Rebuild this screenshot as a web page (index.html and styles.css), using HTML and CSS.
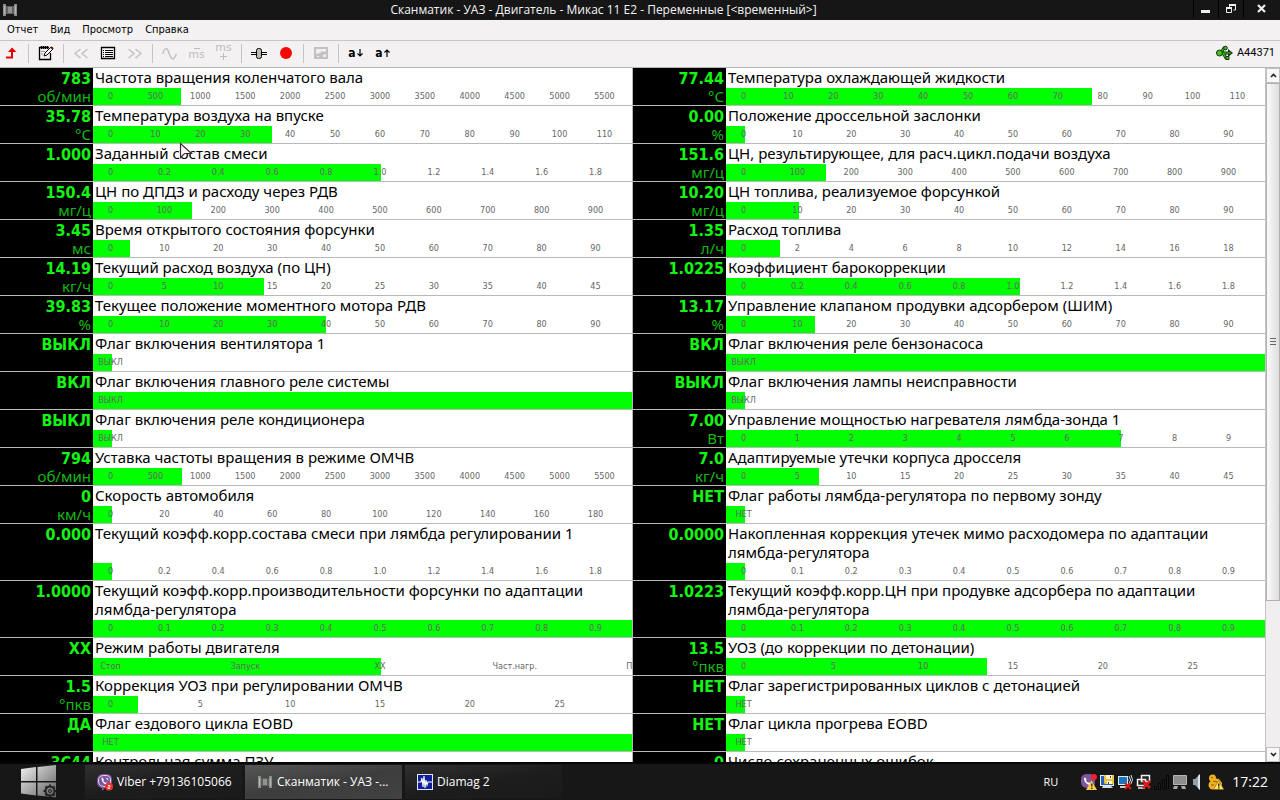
FILE: index.html
```html
<!DOCTYPE html>
<html lang="ru">
<head>
<meta charset="utf-8">
<title>Сканматик - УАЗ - Двигатель - Микас 11 E2 - Переменные</title>
<link rel="stylesheet" href="styles.css">
</head>
<body>
<header class="titlebar">
  <svg class="app-icon" width="16" height="16" viewBox="0 0 16 16"><path d="M1 2h3v2h8V2h3v12h-3v-2H4v2H1z" fill="#8a8d8a"/><path d="M2 4h1v8H2zM13 4h1v8h-1z" fill="#b5b8b5"/><path d="M4 4h8v8H4z" fill="#5f625f"/><path d="M6 5h4v6H6z" fill="#8f928f"/></svg>
  <h1 class="caption">Сканматик - УАЗ - Двигатель - Микас 11 E2 - Переменные [&lt;временный&gt;]</h1>
  <div class="window-buttons">
    <button class="win-btn" aria-label="Свернуть"><svg width="10" height="10" viewBox="0 0 10 10"><path d="M0 6h9v3H0z" fill="#eee"/></svg></button>
    <button class="win-btn" aria-label="Восстановить"><svg width="10" height="10" viewBox="0 0 10 10"><path d="M3.500 3V1h6v5h-2M.5 4.500h5v4h-5z" fill="none" stroke="#eee"/><path d="M3 0h7v2H3zM0 3h6v2H0z" fill="#eee"/></svg></button>
    <button class="win-btn win-close" aria-label="Закрыть"><svg width="10" height="10" viewBox="0 0 10 10"><path d="M1 1l7 7M8 1L1 8" stroke="#eee" stroke-width="2.200"/></svg></button>
  </div>
</header>

<nav class="menubar">
  <button class="menu-item">Отчет</button>
  <button class="menu-item">Вид</button>
  <button class="menu-item">Просмотр</button>
  <button class="menu-item">Справка</button>
</nav>

<div class="toolbar" role="toolbar">
  <button class="tool" aria-label="Назад"><svg width="16" height="16" viewBox="0 0 16 16"><path d="M2 12.500h6V6" fill="none" stroke="#e80000" stroke-width="2"/><path d="M4 7l4-4.500L12.500 7z" fill="#e80000"/></svg></button>
  <span class="sep"></span>
  <button class="tool" aria-label="Заметки"><svg width="16" height="16" viewBox="0 0 16 16" fill="none" stroke="#000"><path d="M11 2.500H1.500v12h11V8M3.500 1v3M5.500 1v3M7.500 1v3M9.500 1v3" stroke-width="1.300"/><path d="M6 11l1-3 6-6 2 2-6 6z" fill="#fff"/><path d="M13 2l2 2" stroke="#701010" stroke-width="2"/><path d="M3 6.500h4M3 9h2" stroke="#999"/></svg></button>
  <span class="sep"></span>
  <button class="tool" disabled aria-label="Предыдущая"><svg width="16" height="16" viewBox="0 0 16 16" fill="none" stroke="#c2c2c2" stroke-width="1.400"><path d="M7.500 4L2 8.500 7.500 13M14.500 4L9 8.500l5.500 4.500"/></svg></button>
  <button class="tool" aria-label="Список"><svg width="16" height="16" viewBox="0 0 16 16"><path d="M1.500 2.500h13v11h-13z" fill="#fff" stroke="#000" stroke-width="1.300"/><path d="M3 5.500h1M5 5.500h8M3 7.500h1M5 7.500h8M3 9.500h1M5 9.500h8M3 11.500h1M5 11.500h8" stroke="#000"/></svg></button>
  <button class="tool" disabled aria-label="Следующая"><svg width="16" height="16" viewBox="0 0 16 16" fill="none" stroke="#c2c2c2" stroke-width="1.400"><path d="M1.500 4L7 8.500 1.500 13M8.500 4l5.500 4.500L8.500 13"/></svg></button>
  <span class="sep"></span>
  <button class="tool" disabled aria-label="График"><svg width="16" height="16" viewBox="0 0 16 16" fill="none" stroke="#c2c2c2" stroke-width="1.500"><path d="M1 9c1.500-7 4-7 6-1s4.500 8 6 3.500L14.500 9"/></svg></button>
  <button class="tool ms ms-minus" disabled aria-label="Уменьшить интервал"><svg width="6" height="1" viewBox="0 0 6 1"><path d="M0 0h6v1H0z" fill="#bdbdbd"/></svg><span>ms</span></button>
  <button class="tool ms ms-plus" disabled aria-label="Увеличить интервал"><span>ms</span><svg width="7" height="7" viewBox="0 0 7 7"><path d="M3 0h1v3h3v1H4v3H3V4H0V3h3z" fill="#bdbdbd"/></svg></button>
  <span class="sep"></span>
  <button class="tool" aria-label="Метка"><svg width="18" height="16" viewBox="0 0 18 16"><path d="M1 7.500h16M1 9.500h16" stroke="#000"/><path d="M2 8h3v1H2zM13 8h3v1h-3z" fill="#fff"/><rect x="6.500" y="3.500" width="5" height="10" rx="2" fill="#bcbcae" stroke="#000"/></svg></button>
  <button class="tool" aria-label="Запись"><svg width="16" height="16" viewBox="0 0 16 16"><circle cx="8" cy="8" r="6" fill="#fa0505"/></svg></button>
  <span class="sep"></span>
  <button class="tool" disabled aria-label="Сохранить"><svg width="16" height="16" viewBox="0 0 16 16"><path d="M1 2h14v12H1z" fill="#c2c2c2"/><path d="M3 4h10v2l-2 1-2-1-2 2-4 1z" fill="#f1f0f1"/><path d="M4 11h2v1H4zM10 10l3-1v3h-3z" fill="#f1f0f1"/></svg></button>
  <span class="sep"></span>
  <button class="tool sort">a<svg width="6" height="8" viewBox="0 0 6 8"><path d="M3 0v7M.5 4.500L3 7l2.500-2.500" fill="none" stroke="#000" stroke-width="1.200"/></svg></button>
  <button class="tool sort">a<svg width="6" height="8" viewBox="0 0 6 8"><path d="M3 8V1M.5 3.500L3 1l2.500 2.500" fill="none" stroke="#000" stroke-width="1.200"/></svg></button>
  <div class="device">
    <svg width="17" height="16" viewBox="0 0 17 16"><g fill="none" stroke="#17350f" stroke-width="3"><path d="M2 8h12M5 8l3-5h2M7 8l3 5h2"/></g><path d="M12 4l5 4-5 4z" fill="#17350f"/><g fill="none" stroke="#40c51a" stroke-width="1.200"><path d="M2 8h13M5 8l3-5h2M7 8l3 5h2"/></g><circle cx="3.500" cy="8" r="3" fill="#40c51a" stroke="#17350f"/><circle cx="9.500" cy="3" r="1.800" fill="#40c51a" stroke="#17350f"/><path d="M10 11.500h3v3h-3z" fill="#40c51a" stroke="#17350f"/></svg>
    <span>A44371</span>
  </div>
</div>

<main class="workspace">
  <section class="gauges" id="gauges"></section>
  <div class="scrollbar">
    <button class="scroll-btn" aria-label="Вверх"><svg width="7" height="5" viewBox="0 0 7 5"><path d="M1 4l2.500-2.500L6 4" fill="none" stroke="#222" stroke-width="1.600"/></svg></button>
    <div class="scroll-track"><div class="scroll-thumb"><i></i><i></i><i></i></div></div>
    <button class="scroll-btn" aria-label="Вниз"><svg width="7" height="5" viewBox="0 0 7 5"><path d="M1 1l2.500 2.500L6 1" fill="none" stroke="#222" stroke-width="1.600"/></svg></button>
  </div>
</main>

<footer class="taskbar">
  <button class="start" aria-label="Пуск"><svg width="38" height="34" viewBox="0 0 38 34"><defs><linearGradient id="pane" x1="0" y1="0" x2="1" y2="1"><stop offset="0" stop-color="#f2f2f2"/><stop offset="1" stop-color="#5c5c5c"/></linearGradient></defs><path d="M1 4l15-2v14H1zM17.500 2L36 0v16H17.500zM1 17.500h15v13L1 28.500zM17.500 17.500H36v15l-18.500-2z" fill="url(#pane)"/><g fill="none" stroke="#222"><circle cx="30" cy="26" r="4.500" stroke-width="2"/><circle cx="30" cy="26" r="1.500"/><path d="M30 19.500v2M30 30.500v2M23.500 26h2M34.500 26h2M25.500 21.500l1.500 1.500M33 29l1.500 1.500M34.500 21.500L33 23M27 29l-1.500 1.500" stroke-width="1.800"/></g></svg></button>
  <div class="tasks">
    <button class="task"><svg width="16" height="17" viewBox="0 0 16 17"><path d="M8 0c6 0 7 2 7 7s-2 7-7 7l-3 3v-3C1 13 0 11 0 7c0-5 2-7 8-7z" fill="#7d559c"/><path d="M8 1.500c4.500 0 5.500 1.500 5.500 5.500S12 12.500 8 12.500 1.500 11 1.500 7 3 1.500 8 1.500z" fill="none" stroke="#e6dcf0" stroke-width="1"/><path d="M4.500 4c0 3 2 6 5.500 7l1-1.500-2-1.300-1 .6L6.300 7l.6-1L5.600 3.500zM8.500 3.500c2 .3 3 1.500 3 3.500" fill="#fff"/><circle cx="12" cy="12.500" r="4" fill="#e8322d"/><path d="M11 11.500h2v1.500h-2v1.500h2" fill="none" stroke="#fff" stroke-width=".8"/></svg><span>Viber +79136105066</span></button>
    <button class="task task-active"><svg width="16" height="14" viewBox="0 0 16 14"><path d="M1 1h3v2h8V1h3v12h-3v-2H4v2H1z" fill="#8a8d8a"/><path d="M2 3h1v8H2zM13 3h1v8h-1z" fill="#b5b8b5"/><path d="M4 3h8v8H4z" fill="#5c5f5c"/><path d="M6 4h4v6H6z" fill="#8f928f"/></svg><span>Сканматик - УАЗ -...</span></button>
    <button class="task"><svg width="16" height="16" viewBox="0 0 16 16"><path d="M0 0h16v16H0z" fill="#dfe8ff"/><path d="M1 1h14v14H1z" fill="#10209a"/><path d="M1 8h3l1-4 1 9 1-11 1 12 1-8 1 5 1-3h4" fill="none" stroke="#fff" stroke-width="1.100"/></svg><span>Diamag 2</span></button>
  </div>
  <div class="tray">
    <span class="lang">RU</span>
    <div class="tray-icons">
      <svg width="17" height="16" viewBox="0 0 17 16"><path d="M7 0c6 0 7 2 7 7s-2 7-7 7-7-2-7-7 1-7 7-7z" fill="#7d559c"/><path d="M3 4c0 4 2.500 6.500 6 7l1-1.500-2-1.300-1 .6L5 7l.6-1L4.500 3.500z" fill="#fff"/><circle cx="13" cy="3" r="3" fill="#f2202d"/><path d="M10.500 6.500L16 16H5z" fill="#f6ce55"/><path d="M10 9.500h1.500v3H10zM10 13.500h1.500V15H10z" fill="#5a3a00"/></svg>
      <svg width="16" height="16" viewBox="0 0 16 16"><path d="M0 1h14v11H0z" fill="#e8eef5"/><path d="M1 2h12v9H1z" fill="#2460b8"/><path d="M4 1h10v9H5L4 9z" fill="#e9c544"/><path d="M6 1h6v4H6zM7 7h5v3H7z" fill="#fff8d8"/><path d="M10 2h1v2h-1zM8 8h1v2H8z" fill="#444"/><path d="M3 12h8l2 2H2z" fill="#ddd"/></svg>
      <svg width="16" height="16" viewBox="0 0 16 16"><path d="M0 2h10v9H0z" fill="#dfe8f0"/><path d="M1 3h8v7H1z" fill="#1876c0"/><path d="M2 12h6v2H2z" fill="#ccc"/><path d="M9 3q2 3 0 6M11 2q3 4 0 8M13 1q3 5 0 9" fill="none" stroke="#cfe4f2"/><path d="M7 9l6 6M13 9l-6 6" stroke="#e01818" stroke-width="2"/></svg>
      <svg width="16" height="16" viewBox="0 0 16 16"><path d="M5.500 1.500h8v6h-8zM1.500 5.500h8v6h-8z" fill="#222" stroke="#eee" stroke-width="1.500"/><path d="M2 14h7" stroke="#eee" stroke-width="1.500"/><path d="M7 7l7 7M14 7l-7 7" stroke="#e01818" stroke-width="2.500"/></svg>
      <svg width="16" height="16" viewBox="0 0 16 16" fill="#1e1e1e" stroke="#060606"><path d="M.5 12.500h2v3h-2zM4.500 9.500h2v6h-2zM8.500 5.500h2v10h-2zM12.500 1.500h2v14h-2z"/></svg>
      <svg width="16" height="16" viewBox="0 0 16 16"><path d="M1.500 1.500h13v9h-13z" fill="#8d8d8d" stroke="#b5b5b5"/><path d="M2 12h4l-1 3H1zM9 12h4l1 3h-4z" fill="#aaa"/></svg>
      <svg width="16" height="16" viewBox="0 0 16 16"><path d="M3 5h2l5-5v16l-5-5H3z" fill="#8fa0ae"/><path d="M8 2l2-2v16l-2-2z" fill="#dce3e8"/></svg>
      <svg width="16" height="16" viewBox="0 0 16 16"><circle cx="4.500" cy="4" r="3.500" fill="#eeb120"/><circle cx="5" cy="11" r="4.500" fill="#eeb120"/><path d="M5 4l6 1 3 4v6H6z" fill="#eeb120"/><path d="M3 3.500h2M5 7l4 1M3 11h3" stroke="#8a5a00"/><path d="M10.500 6.500L16 15.500H5.500z" fill="#ffe36a" stroke="#6d5200" stroke-width=".6"/><path d="M10 9.500h1.500v3H10zM10 13.200h1.500v1.300H10z" fill="#3a2a00"/></svg>
    </div>
    <time class="clock">17:22</time>
  </div>
</footer>

<svg class="pointer" width="14" height="18" viewBox="0 0 14 18"><path d="M1.500 1.500v14l4-4h7z" fill="#fff" stroke="#4a2634" stroke-width="1.200"/></svg>
<script src="gauges.js"></script>
</body>
</html>
```
FILE: styles.css
```css
* { box-sizing: border-box; }

body {
  margin: 0;
  height: 100vh;
  display: flex;
  flex-direction: column;
  overflow: hidden;
  background: #fff;
  color: #000;
  font: 11px/14px "DejaVu Sans Condensed", "Noto Sans", sans-serif;
}

button {
  margin: 0;
  padding: 0;
  border: 0;
  background: none;
  color: inherit;
  font: inherit;
}

svg { display: block; flex: none; }

/* Title bar */
.titlebar {
  display: grid;
  grid-template-columns: 18px 1fr 87px;
  align-items: center;
  height: 20px;
  flex: none;
  background: #161616;
  color: #f4f4f4;
}
.app-icon { margin-left: 2px; }
.caption {
  margin: 0;
  padding-right: 4px;
  text-align: center;
  font: 12px/20px "Open Sans", sans-serif;
  white-space: nowrap;
}
.window-buttons { display: flex; height: 20px; }
.win-btn {
  width: 25px;
  height: 18px;
  display: flex;
  align-items: center;
  justify-content: center;
  border-left: 1px solid #000;
}
.win-close { width: 36px; }

/* Menu and toolbar */
.menubar {
  display: flex;
  gap: 12px;
  height: 21px;
  flex: none;
  padding-left: 7px;
  background: #f3f1f2;
  border-bottom: 1px solid #c6c6c6;
}
.menu-item { height: 20px; }
.toolbar {
  display: flex;
  align-items: center;
  height: 27px;
  flex: none;
  padding: 0 5px 2px 0;
  background: #f3f1f2;
  border-bottom: 1px solid #b4b4b4;
}
.tool {
  width: 27px;
  height: 22px;
  display: flex;
  align-items: center;
  justify-content: center;
}
.tool:first-child { width: 24px; }
.sep {
  width: 1px;
  height: 19px;
  margin: 0 3px 0 4px;
  background: #c4c4c4;
}
.ms {
  flex-direction: column;
  color: #bdbdbd;
  font: 11px/11px "DejaVu Sans", sans-serif;
}
.ms-minus { padding-top: 2px; }
.ms-plus { padding-bottom: 4px; }
.sort {
  gap: 1px;
  font: bold 12px/14px "DejaVu Sans Condensed", sans-serif;
}
.device {
  display: flex;
  align-items: center;
  gap: 4px;
  margin-left: auto;
  font: 11px/16px Roboto, sans-serif;
}

/* Gauges */
.workspace {
  display: flex;
  flex: 1;
  min-height: 0;
}
.gauges {
  flex: 1;
  display: grid;
  grid-template-columns: 1fr 1fr;
  column-gap: 1px;
  align-content: start;
  overflow: hidden;
  background: #b9b9b9;
}
.gauge {
  display: grid;
  grid-template-columns: 93px minmax(0, 1fr);
  border-bottom: 1px solid #b9b9b9;
  background: #fff;
}
.reading {
  padding: 1px 2px 0 0;
  background: #000;
  text-align: right;
  font-size: 16px;
  line-height: 19px;
  white-space: nowrap;
}
.value { display: block; color: #14f514; font-weight: bold; }
.unit {
  display: block;
  height: 17px;
  color: #12b812;
  font-family: "Noto Sans", sans-serif;
  font-size: 15px;
  line-height: 17px;
}
.body { display: flex; flex-direction: column; min-width: 0; }
.name {
  flex: 1;
  margin: 0;
  padding: 0 12px 1px 2px;
  font: 15px/19px "Noto Sans", sans-serif;
}
.scale { display: grid; height: 17px; overflow: hidden; }
.bar, .ticks { grid-area: 1 / 1; }
.bar { min-width: 19px; background: #0f0; }
.ticks {
  display: flex;
  min-width: 0;
  color: #666;
  font: 9px/17px "DejaVu Sans Condensed", sans-serif;
}
.cell { flex: none; }
.tick {
  display: flex;
  justify-content: center;
  width: 35px;
  white-space: nowrap;
}

/* Scrollbar */
.scrollbar {
  display: flex;
  flex-direction: column;
  width: 15px;
  background: #f0eeef;
  border-left: 1px solid #c4c4c4;
}
.scroll-btn {
  height: 15px;
  display: flex;
  align-items: center;
  justify-content: center;
  border: 1px solid #c0c0c0;
  background: #f8f8f8;
}
.scroll-track { flex: 1; }
.scroll-thumb {
  display: flex;
  flex-direction: column;
  align-items: center;
  justify-content: center;
  gap: 2px;
  height: 78%;
  border: 1px solid #b0b0b0;
  background: linear-gradient(90deg, #fafafa, #dedede);
}
.scroll-thumb i { width: 6px; height: 1px; background: #666; }

/* Taskbar */
.taskbar {
  display: flex;
  align-items: center;
  height: 38px;
  flex: none;
  border-top: 2px solid #050505;
  background: #171717;
  color: #fff;
  font: 12px/16px "Open Sans", sans-serif;
}
.start { width: 85px; padding-left: 20px; }
.tasks { display: flex; gap: 3px; }
.task {
  display: flex;
  align-items: center;
  gap: 4px;
  width: 157px;
  height: 34px;
  padding-left: 12px;
  background: linear-gradient(170deg, #303030, #1d1d1d 50%, #1a1a1a);
  white-space: nowrap;
}
.task-active { background: linear-gradient(170deg, #565656, #3d3d3d 50%, #424242); }
.tray {
  display: flex;
  align-items: center;
  margin-left: auto;
  padding-right: 12px;
}
.lang { margin-right: 23px; font-size: 11px; }
.tray-icons { display: flex; gap: 2px; }
.clock { margin-left: 8px; font-size: 14px; }

.pointer { position: absolute; left: 179px; top: 142px; }
```
FILE: gauges.js
```js
const range = (step, count, digits = 0) =>
  Array.from({ length: count }, (_, i) => (i ? (i * step).toFixed(digits) : "0"));

// Numeric parameter: the bar ends at value / step divisions.
const num = (value, unit, name, step, count, digits = 0) => ({
  value, unit, name, count,
  labels: range(step, count, digits),
  fill: Number(value) / step / count,
});

// Two-state flag: the bar is either empty or full.
const flag = (value, name, on, label) => ({
  value, unit: "", name, count: 1, labels: [label], fill: on ? 1 : 0,
});

const gauges = [
  num("783", "об/мин", "Частота вращения коленчатого вала", 500, 12),
  num("77.44", "°C", "Температура охлаждающей жидкости", 10, 12),
  num("35.78", "°C", "Температура воздуха на впуске", 10, 12),
  num("0.00", "%", "Положение дроссельной заслонки", 10, 10),
  num("1.000", "", "Заданный состав смеси", 0.2, 10, 1),
  num("151.6", "мг/ц", "ЦН, результирующее, для расч.цикл.подачи воздуха", 100, 10),
  num("150.4", "мг/ц", "ЦН по ДПДЗ и расходу через РДВ", 100, 10),
  num("10.20", "мг/ц", "ЦН топлива, реализуемое форсункой", 10, 10),
  num("3.45", "мс", "Время открытого состояния форсунки", 10, 10),
  num("1.35", "л/ч", "Расход топлива", 2, 10),
  num("14.19", "кг/ч", "Текущий расход воздуха (по ЦН)", 5, 10),
  num("1.0225", "", "Коэффициент барокоррекции", 0.2, 10, 1),
  num("39.83", "%", "Текущее положение моментного мотора РДВ", 10, 10),
  num("13.17", "%", "Управление клапаном продувки адсорбером (ШИМ)", 10, 10),
  flag("ВЫКЛ", "Флаг включения вентилятора 1", false, "ВЫКЛ"),
  flag("ВКЛ", "Флаг включения реле бензонасоса", true, "ВЫКЛ"),
  flag("ВКЛ", "Флаг включения главного реле системы", true, "ВЫКЛ"),
  flag("ВЫКЛ", "Флаг включения лампы неисправности", false, "ВЫКЛ"),
  flag("ВЫКЛ", "Флаг включения реле кондиционера", false, "ВЫКЛ"),
  num("7.00", "Вт", "Управление мощностью нагревателя лямбда-зонда 1", 1, 10),
  num("794", "об/мин", "Уставка частоты вращения в режиме ОМЧВ", 500, 12),
  num("7.0", "кг/ч", "Адаптируемые утечки корпуса дросселя", 5, 10),
  num("0", "км/ч", "Скорость автомобиля", 20, 10),
  flag("НЕТ", "Флаг работы лямбда-регулятора по первому зонду", false, "НЕТ"),
  num("0.000", "", "Текущий коэфф.корр.состава смеси при лямбда регулировании 1", 0.2, 10, 1),
  num("0.0000", "", "Накопленная коррекция утечек мимо расходомера по адаптации лямбда-регулятора", 0.1, 10, 1),
  num("1.0000", "", "Текущий коэфф.корр.производительности форсунки по адаптации лямбда-регулятора", 0.1, 10, 1),
  num("1.0223", "", "Текущий коэфф.корр.ЦН при продувке адсорбера по адаптации лямбда-регулятора", 0.1, 10, 1),
  { value: "ХХ", unit: "", name: "Режим работы двигателя", count: 4, fill: 0.5,
    labels: ["Стоп", "Запуск", "ХХ", "Част.нагр.", "Полн.нагр."] },
  num("13.5", "°пкв", "УОЗ (до коррекции по детонации)", 5, 6),
  num("1.5", "°пкв", "Коррекция УОЗ при регулировании ОМЧВ", 5, 6),
  flag("НЕТ", "Флаг зарегистрированных циклов с детонацией", false, "НЕТ"),
  flag("ДА", "Флаг ездового цикла EOBD", true, "НЕТ"),
  flag("НЕТ", "Флаг цикла прогрева EOBD", false, "НЕТ"),
  flag("3C44", "Контрольная сумма ПЗУ", false, ""),
  flag("0", "Число сохраненных ошибок", false, ""),
];

document.getElementById("gauges").innerHTML = gauges.map((g) => `
  <article class="gauge">
    <div class="reading"><span class="value">${g.value}</span><span class="unit">${g.unit}</span></div>
    <div class="body">
      <h2 class="name">${g.name}</h2>
      <div class="scale">
        <div class="bar" style="width: min(100%, calc(18px + ${g.fill * 100}%))"></div>
        <div class="ticks">${g.labels.map((t) =>
          `<div class="cell" style="width: ${100 / g.count}%"><span class="tick">${t}</span></div>`).join("")}</div>
      </div>
    </div>
  </article>`).join("");
```
